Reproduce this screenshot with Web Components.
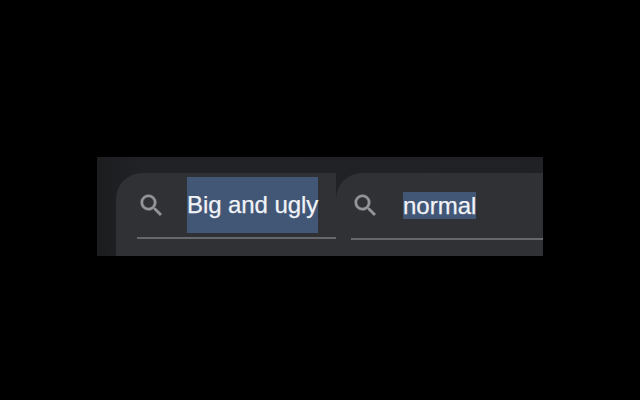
<!DOCTYPE html>
<html>
<head>
<meta charset="utf-8">
<style>
    html, body { margin: 0; height: 100%; background: #000; }
</style>
</head>
<body>
<search-strip>
    <search-tab first hl="56" gap="21" style="width:220px">Big and ugly</search-tab>
    <search-tab hl="27" gap="23" style="flex:1">normal</search-tab>
</search-strip>
<script>
// Bande sombre qui contient les onglets
class SearchStrip extends HTMLElement {
    constructor() {
        super();
        this.attachShadow({ mode: 'open' }).innerHTML = `
            <style>
                :host { display: block; padding: 157px 97px 0; }
                .strip {
                    display: flex;
                    height: 83px;
                    padding: 16px 0 0 19px;
                    background: linear-gradient(90deg, #1c1d1f, #212225 10%, #202124);
                }
            </style>
            <div class="strip"><slot></slot></div>
        `;
    }
}

// Un onglet avec loupe, texte sélectionné et filet
class SearchTab extends HTMLElement {
    constructor() {
        super();
        const first = this.hasAttribute('first');
        const hl = this.getAttribute('hl');
        const gap = this.getAttribute('gap');
        this.attachShadow({ mode: 'open' }).innerHTML = `
            <style>
                :host { display: block; }
                .tab {
                    height: 83px;
                    box-sizing: border-box;
                    padding: 4px 0 0 ${first ? 21 : 15}px;
                    background: #303134;
                    border-top-left-radius: 26px;
                }
                .row {
                    display: flex;
                    align-items: center;
                    height: 56px;
                    border-bottom: 2px solid #66686c;
                    padding-bottom: ${first ? 4 : 5}px;
                }
                svg { width: 29px; height: 29px; margin-right: ${gap}px; flex: none; }
                .text {
                    font: 24px/${hl}px "Liberation Sans", Arial, sans-serif;
                    color: #f1f3f7;
                    background: #425676;
                    height: ${hl}px;
                    white-space: nowrap;
                    letter-spacing: ${first ? -0.08 : 0}px;
                    -webkit-text-stroke: 0.25px #f1f3f7;
                }
            </style>
            <div class="tab">
                <div class="row">
                    <svg viewBox="0 0 24 24" fill="#939599" stroke="#939599" stroke-width="0.35"><path d="M15.5 14h-.79l-.28-.27A6.47 6.47 0 0 0 16 9.5 6.5 6.5 0 1 0 9.5 16c1.61 0 3.09-.59 4.23-1.57l.27.28v.79l5 4.99L20.49 19l-4.99-5zm-6 0C7.01 14 5 11.99 5 9.5S7.01 5 9.5 5 14 7.01 14 9.5 11.99 14 9.5 14z"/></svg>
                    <span class="text"><slot></slot></span>
                </div>
            </div>
        `;
    }
}

customElements.define('search-strip', SearchStrip);
customElements.define('search-tab', SearchTab);
</script>
</body>
</html>
